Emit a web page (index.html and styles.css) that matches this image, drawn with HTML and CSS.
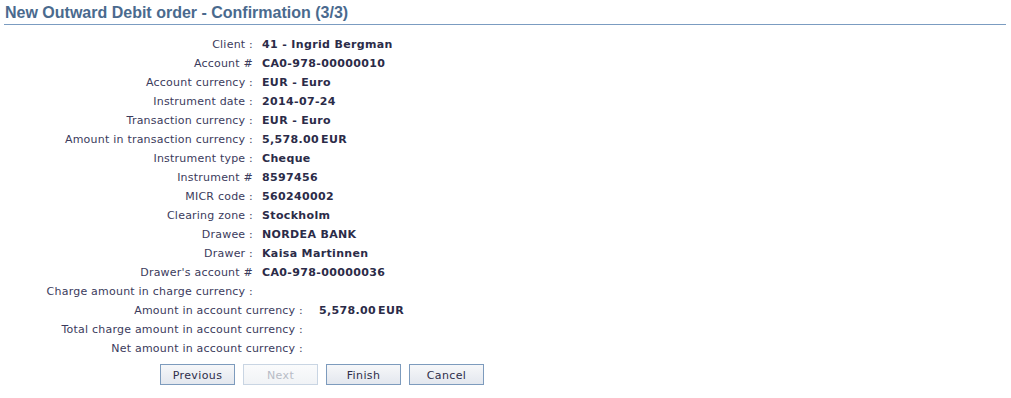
FILE: index.html
```html
<!DOCTYPE html>
<html>
<head>
<meta charset="utf-8">
<link rel="stylesheet" href="styles.css">
</head>
<body>
<div class="page">
  <h1 class="title">New Outward Debit order - Confirmation (3/3)</h1>
  <div class="details">
    <div class="row"><span class="lbl">Client :</span><span class="val">41 - Ingrid Bergman</span></div>
    <div class="row"><span class="lbl">Account #</span><span class="val">CA0-978-00000010</span></div>
    <div class="row"><span class="lbl">Account currency :</span><span class="val">EUR - Euro</span></div>
    <div class="row"><span class="lbl">Instrument date :</span><span class="val">2014-07-24</span></div>
    <div class="row"><span class="lbl">Transaction currency :</span><span class="val">EUR - Euro</span></div>
    <div class="row"><span class="lbl">Amount in transaction currency :</span><span class="val">5,578.00<span class="cur">EUR</span></span></div>
    <div class="row"><span class="lbl">Instrument type :</span><span class="val">Cheque</span></div>
    <div class="row"><span class="lbl">Instrument #</span><span class="val">8597456</span></div>
    <div class="row"><span class="lbl">MICR code :</span><span class="val">560240002</span></div>
    <div class="row"><span class="lbl">Clearing zone :</span><span class="val">Stockholm</span></div>
    <div class="row"><span class="lbl">Drawee :</span><span class="val">NORDEA BANK</span></div>
    <div class="row"><span class="lbl">Drawer :</span><span class="val">Kaisa Martinnen</span></div>
    <div class="row"><span class="lbl">Drawer's account #</span><span class="val">CA0-978-00000036</span></div>
    <div class="row"><span class="lbl">Charge amount in charge currency :</span><span class="val"></span></div>
  </div>
  <div class="details totals">
    <div class="row"><span class="lbl">Amount in account currency :</span><span class="val">5,578.00<span class="cur">EUR</span></span></div>
    <div class="row"><span class="lbl">Total charge amount in account currency :</span><span class="val"></span></div>
    <div class="row"><span class="lbl">Net amount in account currency :</span><span class="val"></span></div>
  </div>
  <div class="buttons">
    <button class="btn">Previous</button>
    <button class="btn" disabled>Next</button>
    <button class="btn">Finish</button>
    <button class="btn">Cancel</button>
  </div>
</div>
</body>
</html>
```
FILE: styles.css
```css
html, body {
  margin: 0;
  padding: 0;
  background: #ffffff;
}
.page {
  padding: 0 5px 0 4px;
  font-family: "DejaVu Sans", sans-serif;
  font-size: 11px;
  color: #3b3b5c;
}
.title {
  margin: 0;
  padding: 4px 0 2px 1px;
  font-family: "Liberation Sans", Arial, sans-serif;
  font-size: 16px;
  font-weight: bold;
  line-height: 18px;
  color: #4a6a8e;
  border-bottom: 1px solid #7b9cc1;
}
.details {
  display: grid;
  grid-template-columns: 249px auto;
  padding-top: 10px;
}
.row {
  display: contents;
}
.lbl {
  text-align: right;
  line-height: 19px;
  height: 19px;
  white-space: nowrap;
  letter-spacing: 0.22px;
}
.val {
  padding-left: 9px;
  line-height: 19px;
  height: 19px;
  font-weight: bold;
  color: #2b2b48;
  white-space: nowrap;
  letter-spacing: 0.35px;
}
.cur {
  margin-left: 2px;
}
.totals {
  grid-template-columns: 299px auto;
  padding-top: 0;
}
.totals .val {
  padding-left: 16px;
}
.buttons {
  display: flex;
  gap: 8px;
  padding: 6px 0 0 156px;
}
.btn {
  width: 75px;
  height: 21px;
  padding: 1px 0 0;
  font-family: "DejaVu Sans", sans-serif;
  font-size: 11px;
  letter-spacing: 0.4px;
  color: #2e2e4a;
  border: 1px solid #7d9bbd;
  background: linear-gradient(#f6f7f9, #e3e7ee);
}
.btn:disabled {
  color: #b8bcc6;
  border-color: #c9d5e3;
  background: linear-gradient(#fafbfc, #f1f3f6);
}
```
